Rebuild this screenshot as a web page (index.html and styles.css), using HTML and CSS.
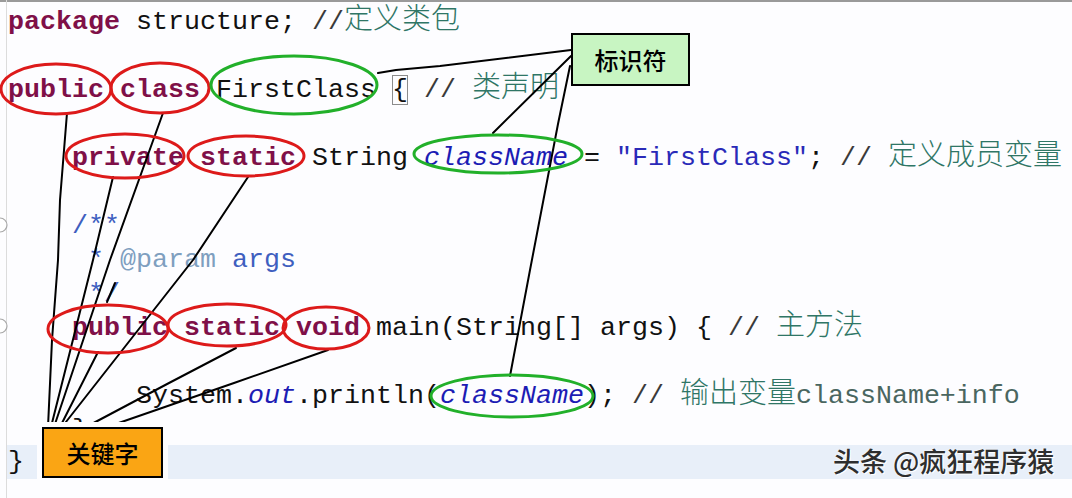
FILE: index.html
```html
<!DOCTYPE html>
<html lang="zh-CN">
<head>
<meta charset="utf-8">
<title>FirstClass 注解</title>
<link rel="stylesheet" href="styles.css">
</head>
<body>
<div class="editor">
  <div class="gutter"></div>
  <div class="code">
    <div class="ln"><span class="kw">package</span> structure; <span class="sl">//</span><span class="cn">定义类包</span></div>
    <div class="ln"></div>
    <div class="ln"><span class="kw">public</span> <span class="kw">class</span> FirstClass <span class="match">{</span> <span class="sl">//</span> <span class="cn">类声明</span></div>
    <div class="ln"></div>
    <div class="ln">    <span class="kw">private</span> <span class="kw">static</span> String <span class="fld">className</span> = <span class="str">"FirstClass"</span>; <span class="sl">//</span> <span class="cn">定义成员变量</span></div>
    <div class="ln"></div>
    <div class="ln">    <span class="doc">/**</span></div>
    <div class="ln">     <span class="doc">*</span> <span class="tag">@param</span> <span class="doc">args</span></div>
    <div class="ln">     <span class="doc">*/</span></div>
    <div class="ln">    <span class="kw">public</span> <span class="kw">static</span> <span class="kw">void</span> main(String[] args) { <span class="sl">//</span> <span class="cn">主方法</span></div>
    <div class="ln"></div>
    <div class="ln">        System.<span class="fld">out</span>.println(<span class="fld">className</span>); <span class="sl">//</span> <span class="cn">输出变量</span><span class="cm">className+info</span></div>
    <div class="ln">    }</div>
    <div class="ln current">}</div>
  </div>

  <svg class="overlay" width="1072" height="498" viewBox="0 0 1072 498" xmlns="http://www.w3.org/2000/svg">
    <g fill="#fff" stroke="#a8a8a8" stroke-width="1.2">
      <circle cx="0" cy="225" r="7"/>
      <circle cx="0" cy="326" r="7"/>
    </g>
    <g fill="none" stroke="#000" stroke-width="2" stroke-linejoin="round" stroke-linecap="round">
      <polyline points="378,73 396,70 440,66 571,50"/>
      <polyline points="493,133 571,56"/>
      <polyline points="510,376 530,270 558,124 570,66"/>
      <polyline points="67,113 60,200 58,260 52,340 48,427"/>
      <polyline points="163,113 110,260 54,427"/>
      <polyline points="113,177 93,260 51,427"/>
      <polyline points="248,177 193,260 62,427"/>
      <polyline points="98,352 60,427"/>
      <polyline points="115,283 107,302"/>
      <polyline points="236,348 169,383 86,427"/>
      <polyline points="328,350 234,383 110,426"/>
    </g>
    <g fill="none" stroke="#dd1a1a" stroke-width="3">
      <ellipse cx="56" cy="89" rx="55" ry="25"/>
      <ellipse cx="160" cy="88" rx="49" ry="25"/>
      <ellipse cx="125" cy="156" rx="59" ry="22"/>
      <ellipse cx="246" cy="156" rx="58" ry="20"/>
      <ellipse cx="108" cy="329" rx="60" ry="24"/>
      <ellipse cx="227" cy="325" rx="59" ry="21"/>
      <ellipse cx="326" cy="328" rx="43" ry="21"/>
    </g>
    <g fill="none" stroke="#22b02a" stroke-width="3">
      <ellipse cx="294" cy="85" rx="83" ry="29"/>
      <ellipse cx="498" cy="154" rx="84" ry="19"/>
      <ellipse cx="512" cy="396" rx="81" ry="21"/>
    </g>
  </svg>

  <div class="callout ident">标识符</div>
  <div class="callout keyword">关键字</div>
  <div class="watermark">头条 @疯狂程序猿</div>
</div>
</body>
</html>
```

FILE: styles.css
```css
html, body {
  margin: 0;
  padding: 0;
}

body {
  width: 1072px;
  height: 498px;
  overflow: hidden;
  background: #fdfdff;
}

.editor {
  position: relative;
  display: flex;
  width: 1072px;
  height: 498px;
  box-shadow: inset 0 2px 0 #9a9a9a;
}

.gutter {
  width: 6px;
  flex: none;
  border-right: 1px solid #dcdcdc;
}

.code {
  flex: 1;
  padding: 5px 0 0 1px;
  font-family: "Liberation Mono", monospace;
  font-size: 26.67px;
  color: #111;
}

.ln {
  height: 34px;
  line-height: 34px;
  white-space: pre;
}

.ln.current {
  background: #e8eff9;
  margin-top: -2px;
  margin-left: -1px;
  padding-left: 1px;
}

.kw {
  color: #7f1048;
  font-weight: bold;
}

.fld {
  color: #1c1cb4;
  font-style: italic;
}

.str {
  color: #2a2ab8;
}

.match {
  outline: 1px solid #8c8c8c;
  outline-offset: -1px;
}

.sl {
  color: #3a3a3a;
}

.cn {
  font-family: "Noto Sans CJK SC", sans-serif;
  font-size: 29px;
  font-weight: 300;
  line-height: 22px;
  color: #2f7666;
}

.cm {
  color: #4a6660;
}

.doc {
  color: #3f5fbf;
}

.tag {
  color: #7f9fbf;
}

.overlay {
  position: absolute;
  left: 0;
  top: 0;
  pointer-events: none;
}

.callout {
  position: absolute;
  box-sizing: border-box;
  display: flex;
  align-items: center;
  justify-content: center;
  border: 2px solid #000;
  font-family: "Noto Sans CJK SC", sans-serif;
  font-size: 24px;
  font-weight: 500;
  color: #000;
}

.ident {
  left: 571px;
  top: 33px;
  width: 119px;
  height: 53px;
  background: #c8f5c2;
}

.keyword {
  left: 42px;
  top: 427px;
  width: 121px;
  height: 51px;
  background: #faa514;
  box-shadow: 0 0 0 5px #fdfdff;
}

.watermark {
  position: absolute;
  left: 833px;
  top: 446px;
  font-family: "Noto Sans CJK SC", sans-serif;
  font-size: 27px;
  font-weight: 500;
  line-height: 30px;
  color: #2e2e2e;
  text-shadow: 0 0 2px #fff, 1px 1px 0 #fff;
  white-space: nowrap;
}
```
